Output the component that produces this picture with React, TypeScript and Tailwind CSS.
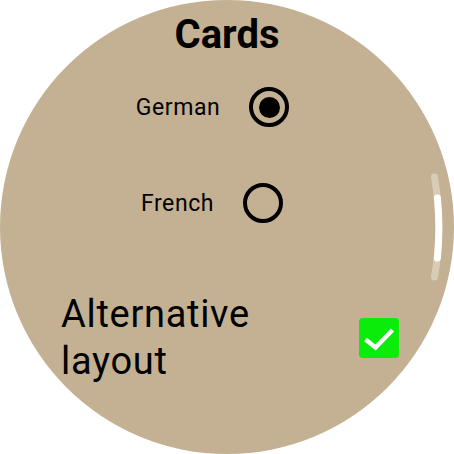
import React from "react";

function Radio({ checked }: { checked?: boolean }) {
  return (
    <div className="flex h-10 w-10 shrink-0 items-center justify-center rounded-full border-4 border-black">
      {checked && <div className="h-[21px] w-[21px] rounded-full bg-black" />}
    </div>
  );
}

function Checkbox() {
  return (
    <div className="flex h-10 w-10 shrink-0 items-center justify-center rounded-[4px] bg-[#0aec0a]">
      <svg width="40" height="40" viewBox="0 0 40 40">
        <polyline
          points="6.5,21.5 16.5,29.5 33.5,12"
          fill="none"
          stroke="white"
          strokeWidth="4.5"
        />
      </svg>
    </div>
  );
}

function ScrollIndicator() {
  return (
    <svg
      className="pointer-events-none absolute inset-0"
      width="454"
      height="454"
      viewBox="0 0 454 454"
    >
      {/* track */}
      <path
        d="M434.5 177 A300 300 0 0 1 434.5 277"
        fill="none"
        stroke="rgba(255,255,255,0.35)"
        strokeWidth="7"
        strokeLinecap="round"
      />
      {/* thumb */}
      <path
        d="M437.4 198 A300 300 0 0 1 437.4 258"
        fill="none"
        stroke="white"
        strokeWidth="7"
        strokeLinecap="round"
      />
    </svg>
  );
}

export default function App() {
  return (
    <div
      className="h-[454px] w-[454px] bg-white text-black"
      style={{ fontFamily: "Roboto, 'Noto Sans', sans-serif" }}
    >
      <div className="relative h-[454px] w-[454px] overflow-hidden rounded-full bg-[#c4b193]">
        <div className="flex flex-col pt-[12px]">
          <h1 className="text-center text-[40px] font-bold leading-[46px]">Cards</h1>

          <div className="mt-[29px] flex items-center justify-center gap-[29px] pr-[29px]">
            <span className="text-[23px] leading-[27px] tracking-[0.6px]">German</span>
            <Radio checked />
          </div>

          <div className="mt-[56px] flex items-center justify-center gap-[29px] pr-[30px]">
            <span className="text-[23px] leading-[27px] tracking-[0.6px]">French</span>
            <Radio />
          </div>

          <div className="mt-[68px] flex items-center justify-between pl-[61px] pr-[55px]">
            <span className="w-[210px] text-[38px] leading-[47px] tracking-[0.7px]">
              Alternative layout
            </span>
            <Checkbox />
          </div>
        </div>
        <ScrollIndicator />
      </div>
    </div>
  );
}
